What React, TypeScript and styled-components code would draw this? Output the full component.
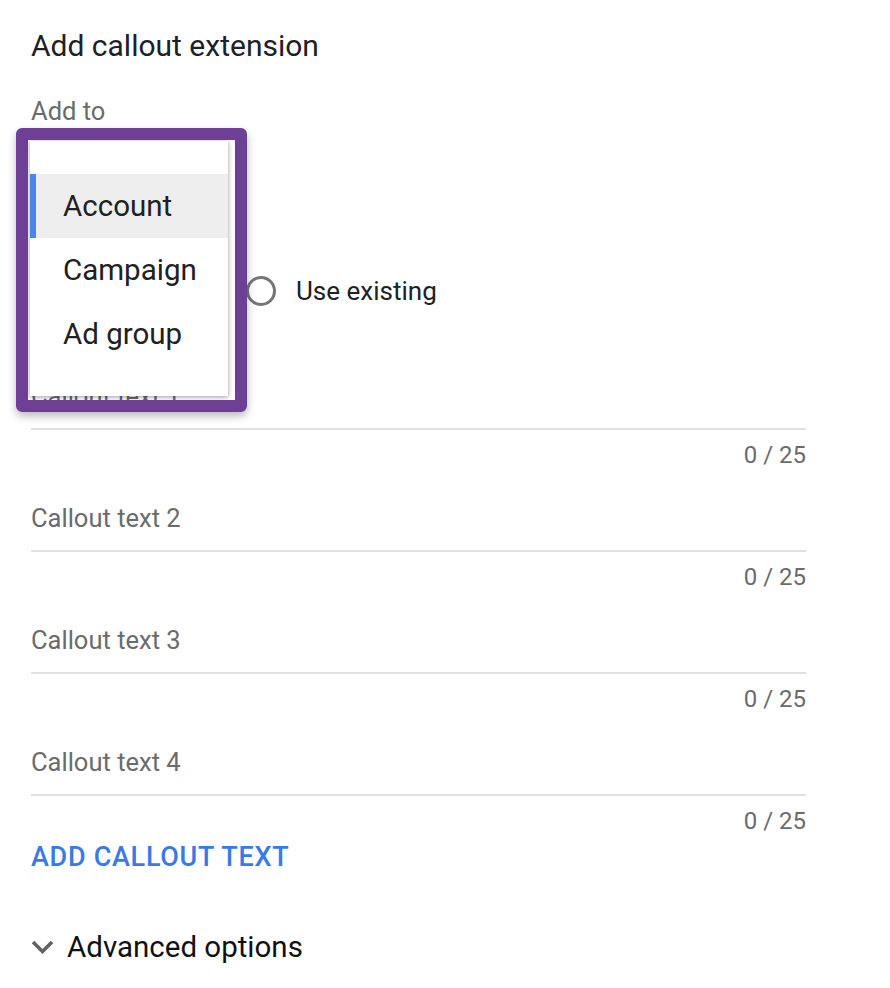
import * as React from "react";
import styled, { createGlobalStyle } from "styled-components";

const GlobalStyle = createGlobalStyle`
  html, body {
    margin: 0;
    padding: 0;
    background: #ffffff;
  }
  body {
    font-family: Roboto, "Liberation Sans", Arial, sans-serif;
    color: #212121;
  }
`;

const Page = styled.div`
  position: relative;
  width: 775px;
  padding: 30px 0 0 31px;
`;

const Title = styled.h1`
  margin: 0;
  font-size: 30px;
  line-height: 32px;
  font-weight: 400;
  color: #202124;
`;

const FieldLabel = styled.div`
  margin-top: 35px;
  font-size: 25.5px;
  line-height: 28px;
  color: #6b6b6b;
`;

const SelectBox = styled.div`
  margin-top: 10px;
  width: 190px;
  height: 56px;
  border-bottom: 2px solid #e0e0e0;
`;

const RadioGroup = styled.div`
  display: grid;
  grid-template-columns: 215px auto;
  margin-top: 78px;
  height: 40px;
  align-items: center;
`;

const RadioOption = styled.label`
  display: flex;
  align-items: center;
  gap: 20px;
  font-size: 26px;
  color: #202124;
`;

const RadioCircle = styled.span<{ $checked?: boolean }>`
  box-sizing: border-box;
  width: 30px;
  height: 30px;
  border-radius: 50%;
  border: 3px solid ${(p) => (p.$checked ? "#4285f4" : "#757575")};
`;

const Fields = styled.div`
  display: flex;
  flex-direction: column;
  gap: 26px;
  margin-top: 60px;
`;

const Field = styled.div`
  display: flex;
  flex-direction: column;
`;

const InputArea = styled.div`
  height: 57px;
  border-bottom: 2px solid #e0e0e0;
  font-size: 25.5px;
  line-height: 50px;
  color: #6b6b6b;
`;

const Counter = styled.div`
  margin-top: 13px;
  text-align: right;
  font-size: 24px;
  line-height: 24px;
  color: #6b6b6b;
`;

const AddButton = styled.button`
  margin-top: 9px;
  padding: 0;
  border: 0;
  background: none;
  font-family: inherit;
  font-size: 27px;
  line-height: 30px;
  font-weight: 500;
  letter-spacing: 0.7px;
  color: #3a7ae6;
  text-transform: uppercase;
  cursor: pointer;
`;

const Advanced = styled.div`
  display: flex;
  align-items: center;
  gap: 13px;
  margin-top: 59px;
  font-size: 29.5px;
  line-height: 32px;
  color: #111;
`;

const Frame = styled.div`
  position: absolute;
  left: 16px;
  top: 128px;
  box-sizing: border-box;
  width: 231px;
  height: 284px;
  border: 12px solid #6d3f97;
  border-radius: 6px;
  box-shadow: 0 4px 9px rgba(0, 0, 0, 0.28);
`;

const Menu = styled.ul`
  position: absolute;
  left: 30px;
  top: 141px;
  width: 198px;
  height: 255px;
  margin: 0;
  padding: 33px 0 0;
  box-sizing: border-box;
  list-style: none;
  background: #ffffff;
  box-shadow: 0 1px 5px rgba(0, 0, 0, 0.4);
`;

const MenuItem = styled.li<{ $active?: boolean }>`
  height: 64px;
  padding-left: 27px;
  border-left: 6px solid ${(p) => (p.$active ? "#4a86e8" : "transparent")};
  background: ${(p) => (p.$active ? "#eeeeee" : "transparent")};
  font-size: 29.5px;
  line-height: 64px;
  color: #212121;
  white-space: nowrap;
`;

const Chevron = () => (
  <svg width="23" height="16" viewBox="0 0 23 16">
    <path d="M2 3 L11.5 12.5 L21 3" fill="none" stroke="#5f6368" strokeWidth="3.6" />
  </svg>
);

const fields = [1, 2, 3, 4];

export default function App() {
  return (
    <>
      <GlobalStyle />
      <Page>
        <Title>Add callout extension</Title>
        <FieldLabel>Add to</FieldLabel>
        <SelectBox />
        <RadioGroup>
          <RadioOption>
            <RadioCircle $checked />
          </RadioOption>
          <RadioOption>
            <RadioCircle />
            Use existing
          </RadioOption>
        </RadioGroup>
        <Fields>
          {fields.map((n) => (
            <Field key={n}>
              <InputArea>Callout text {n}</InputArea>
              <Counter>0 / 25</Counter>
            </Field>
          ))}
        </Fields>
        <AddButton>Add callout text</AddButton>
        <Advanced>
          <Chevron />
          Advanced options
        </Advanced>
        <Menu>
          <MenuItem $active>Account</MenuItem>
          <MenuItem>Campaign</MenuItem>
          <MenuItem>Ad group</MenuItem>
        </Menu>
        <Frame />
      </Page>
    </>
  );
}
